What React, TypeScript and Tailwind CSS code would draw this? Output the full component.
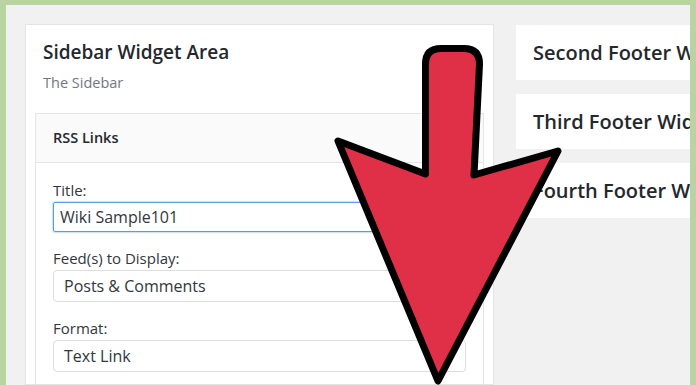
import type { ReactNode } from "react";

const font = { fontFamily: '"Open Sans", "Liberation Sans", sans-serif' };

function Field({ label, children, first }: { label: string; children: ReactNode; first?: boolean }) {
  return (
    <div className={first ? "" : "mt-[16px]"}>
      <div className="text-[15px] leading-[20px] text-[#32373c]">{label}</div>
      <div className="mt-[2px]">{children}</div>
    </div>
  );
}

function FooterCard({ title }: { title: string }) {
  return (
    <div className="h-[55px] w-[300px] bg-white flex items-center pl-[17px] shrink-0">
      <span className="text-[20px] font-semibold text-[#23282d] whitespace-nowrap">{title}</span>
    </div>
  );
}

function Arrow() {
  return (
    <svg
      className="absolute inset-0 pointer-events-none"
      width="696"
      height="385"
      viewBox="0 0 696 385"
    >
      <path
        d="M425.5 174 L425.5 64 Q425.5 48.5 441 48.5 L464 48.5 Q479.5 48.5 479.5 64 L474 175 L558 151 L438 381 L338 141 Z"
        fill="#e03048"
        stroke="#000"
        strokeWidth={7}
        strokeLinejoin="round"
      />
    </svg>
  );
}

export default function App() {
  return (
    <div className="relative w-[696px] h-[385px] overflow-hidden bg-[#b8d4a0] pt-[5px] px-[6px]" style={font}>
      <div className="h-full bg-[#f1f1f1] overflow-hidden flex gap-[22px] pl-[19px] pt-[19px]">
        {/* sidebar widget area */}
        <div className="w-[469px] shrink-0 bg-white border border-[#e5e5e5] pt-[15px] px-[9px]">
          <div className="px-[8px]">
            <h2 className="text-[19px] leading-[24px] font-semibold text-[#23282d]">Sidebar Widget Area</h2>
            <p className="mt-[9px] text-[14.5px] leading-[20px] text-[#72777c]">The Sidebar</p>
          </div>

          <div className="mt-[20px] border border-[#e5e5e5]">
            <div className="h-[49px] bg-[#fafafa] border-b border-[#e5e5e5] flex items-center px-[17px]">
              <span className="text-[14.5px] font-semibold text-[#23282d]">RSS Links</span>
            </div>
            <div className="px-[17px] pt-[17px] pb-[20px]">
              <Field label="Title:" first>
                <div className="h-[30px] border border-[#5b9dd9] rounded-[2px] shadow-[0_0_2px_rgba(30,140,190,0.8)] flex items-center px-[6px] text-[16px] text-[#32373c]">
                  Wiki Sample101
                </div>
              </Field>
              <Field label="Feed(s) to Display:">
                <div className="h-[32px] border border-[#ddd] rounded-[4px] flex items-center px-[10px] text-[16px] text-[#32373c]">
                  Posts &amp; Comments
                </div>
              </Field>
              <Field label="Format:">
                <div className="h-[32px] border border-[#ddd] rounded-[4px] flex items-center px-[10px] text-[16px] text-[#32373c]">
                  Text Link
                </div>
              </Field>
            </div>
          </div>
        </div>

        {/* footer widget areas */}
        <div className="flex flex-col gap-[14px] pt-[1px]">
          <FooterCard title="Second Footer Widget Area" />
          <FooterCard title="Third Footer Widget Area" />
          <FooterCard title="Fourth Footer Widget Area" />
        </div>
      </div>
      <Arrow />
    </div>
  );
}
